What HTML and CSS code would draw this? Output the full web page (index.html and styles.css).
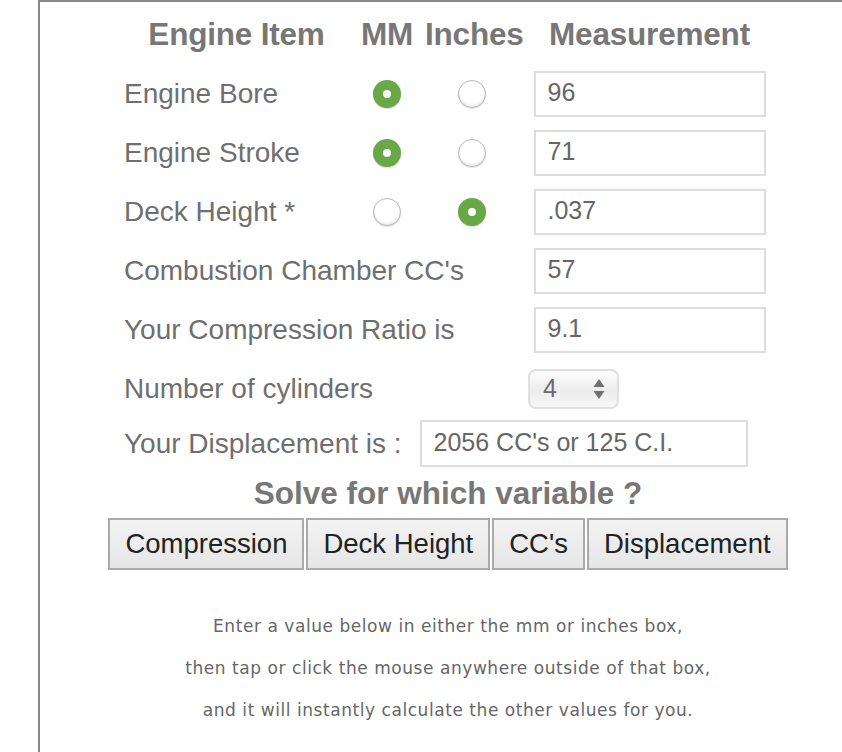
FILE: index.html
```html
<!DOCTYPE html>
<html>
<head>
<meta charset="utf-8">
<link rel="stylesheet" href="styles.css">
</head>
<body>
<div class="page">
  <div class="calc">
    <div class="hd">Engine Item</div>
    <div class="hd">MM</div>
    <div class="hd">Inches</div>
    <div class="hd">Measurement</div>

    <div class="lbl">Engine Bore</div>
    <div class="rcell"><input type="radio" class="radio" name="bore" checked></div>
    <div class="rcell"><input type="radio" class="radio" name="bore"></div>
    <div class="mcell"><input class="field" type="text" value="96"></div>

    <div class="lbl">Engine Stroke</div>
    <div class="rcell"><input type="radio" class="radio" name="stroke" checked></div>
    <div class="rcell"><input type="radio" class="radio" name="stroke"></div>
    <div class="mcell"><input class="field" type="text" value="71"></div>

    <div class="lbl">Deck Height *</div>
    <div class="rcell"><input type="radio" class="radio" name="deck"></div>
    <div class="rcell"><input type="radio" class="radio" name="deck" checked></div>
    <div class="mcell"><input class="field" type="text" value=".037"></div>

    <div class="lbl wide">Combustion Chamber CC's</div>
    <div class="mcell"><input class="field" type="text" value="57"></div>

    <div class="lbl wide">Your Compression Ratio is</div>
    <div class="mcell"><input class="field" type="text" value="9.1"></div>

    <div class="lbl wide">Number of cylinders</div>
    <div class="mcell start">
      <div class="select"><span>4</span>
        <svg class="arrows" width="12" height="22" viewBox="0 0 12 22"><path d="M6 1 L11.5 9 L0.5 9 Z M0.5 13 L11.5 13 L6 21 Z" fill="#6e6e6e"/></svg>
      </div>
    </div>

    <div class="disp">
      <div class="lbl">Your Displacement is :</div>
      <input class="field dfield" type="text" value="2056 CC's or 125 C.I.">
    </div>
  </div>

  <div class="solve">Solve for which variable ?</div>
  <div class="btns">
    <button class="btn">Compression</button>
    <button class="btn">Deck Height</button>
    <button class="btn">CC's</button>
    <button class="btn">Displacement</button>
  </div>

  <div class="info">
    <p>Enter a value below in either the mm or inches box,</p>
    <p>then tap or click the mouse anywhere outside of that box,</p>
    <p>and it will instantly calculate the other values for you.</p>
  </div>
</div>
</body>
</html>
```
FILE: styles.css
```css
html, body {
  margin: 0;
  padding: 0;
  background: #fff;
  overflow: hidden;
}
body {
  font-family: "Liberation Sans", Arial, Helvetica, sans-serif;
}
.page {
  margin-left: 38px;
  width: 816px;
  height: 750px;
  border-left: 2px solid #888;
  border-top: 2px solid #888;
}
.calc {
  display: grid;
  grid-template-columns: 225px 76px 94px 261px;
  grid-template-rows: 62px repeat(6, 59px) 51px;
  align-items: center;
  margin-left: 84px;
  width: 656px;
}
.hd {
  font-size: 31.5px;
  font-weight: bold;
  color: #777;
  text-align: center;
  white-space: nowrap;
  padding-top: 2px;
  letter-spacing: -0.2px;
}
.lbl {
  font-size: 28px;
  color: #6f6f6f;
  white-space: nowrap;
}
.lbl.wide {
  grid-column: 1 / 4;
}
.rcell {
  display: flex;
  justify-content: center;
  align-items: center;
}
.mcell {
  display: flex;
  justify-content: center;
  align-items: center;
}
.mcell.start {
  justify-content: flex-start;
  padding-left: 9px;
}
.radio {
  appearance: none;
  -webkit-appearance: none;
  margin: 0;
  width: 28px;
  height: 28px;
  border-radius: 50%;
  border: 1px solid #b8b8b8;
  background: #fff;
  box-shadow: inset 0 -2px 3px rgba(0,0,0,0.08), 0 1px 1px rgba(0,0,0,0.12);
  box-sizing: border-box;
  position: relative;
}
.radio:checked {
  border: none;
  background: #69a846;
  box-shadow: 0 1px 1px rgba(0,0,0,0.15);
}
.radio:checked::after {
  content: "";
  position: absolute;
  left: 10px;
  top: 10px;
  width: 8px;
  height: 8px;
  border-radius: 50%;
  background: #fff;
}
.field {
  box-sizing: border-box;
  width: 232px;
  height: 46px;
  border: 2px solid #ddd;
  margin: 0;
  padding: 0 0 2px 12px;
  font-family: "Liberation Sans", Arial, sans-serif;
  font-size: 25px;
  color: #666;
  background: #fff;
  outline: none;
}
.select {
  box-sizing: border-box;
  width: 91px;
  height: 40px;
  border: 2px solid #e0e0e0;
  border-radius: 8px;
  background: linear-gradient(#fdfdfd, #ececec 55%, #f7f7f7);
  box-shadow: inset 0 1px 0 #fff;
  display: flex;
  align-items: center;
  justify-content: space-between;
  padding: 0 12px 0 13px;
  font-size: 25px;
  color: #6a6a6a;
}
.arrows {
  display: block;
}
.disp {
  grid-column: 1 / -1;
  display: flex;
  align-items: center;
  gap: 18px;
}
.dfield {
  width: 328px;
  height: 47px;
}
.solve {
  text-align: center;
  font-size: 31.5px;
  font-weight: bold;
  color: #777;
  margin-top: 2px;
  height: 44px;
  line-height: 44px;
}
.btns {
  display: flex;
  justify-content: center;
  gap: 2px;
  margin-top: 3px;
}
.btn {
  box-sizing: border-box;
  height: 52px;
  padding: 0 15px;
  border: 2px solid #aaa;
  background: linear-gradient(#f3f3f3, #e6e6e6);
  font-family: "Liberation Sans", Arial, sans-serif;
  font-size: 27.5px;
  color: #222;
  margin: 0;
  border-radius: 0;
}
.info {
  margin-top: 35px;
  text-align: center;
  font-family: "DejaVu Sans", Verdana, sans-serif;
  font-size: 17px;
  letter-spacing: 0.55px;
  color: #666;
}
.info p {
  margin: 0;
  height: 42px;
  line-height: 42px;
}
```
